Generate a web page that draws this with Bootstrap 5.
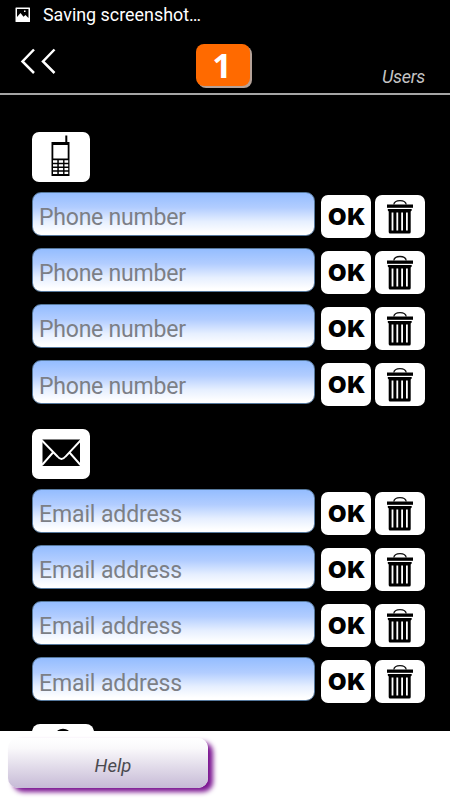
<!DOCTYPE html>
<html lang="en">
<head>
<meta charset="utf-8">
<meta name="viewport" content="width=device-width, initial-scale=1">
<title>Users</title>
<link rel="stylesheet" href="https://cdn.jsdelivr.net/npm/bootstrap@5.3.0/dist/css/bootstrap.min.css">
<style>
  body { font-family: Roboto, "Liberation Sans", sans-serif; width: 450px; height: 800px; }
  svg { display: block; }
  .screen { height: 731px; background: #000; }
  .status { height: 30px; padding-left: 15px; gap: 12px; font-size: 17.9px; line-height: 30px; }
  .topbar { height: 65px; border-bottom: 2px solid #a5a5a5; padding: 14px 25px 0 20px; }
  .back-link { padding-top: 3px; width: 176px; }
  .counter { width: 54px; height: 42px; border-radius: 8px; background: #ff6a00; box-shadow: 2px 2px 0 #b5a298;
    font: bold 34px/42px "Open Sans", sans-serif; padding-right: 2px; }
  .page-name { font-size: 18px; letter-spacing: -.3px; line-height: 22px; color: #c4c4c4; margin-top: 22px; }
  .tile { background: #fff; border-radius: 7px; }
  .tile-head { width: 58px; height: 50px; margin-bottom: 10px; }
  .entries { padding: 36.500px 25px 0 32px; }
  .group { height: 297px; }
  .entry { height: 44px; margin-bottom: 12.2px; }
  .entry .form-control { width: 283px; height: 44px; border: 1px solid #56789c; border-radius: 9px; padding: 8px 6px 0;
    font-size: 23px; letter-spacing: -.22px; color: #333; background: linear-gradient(#94bdff, #b2cdff 35%, #e6efff 68%, #fff 95%); }
  .entry .form-control[type="email"] { letter-spacing: -.12px; }
  .entry .form-control::placeholder { color: #7c7f86; opacity: 1; }
  .entry .act { width: 50px; height: 43px; margin-top: 3px; border: 0; padding: 0; color: #000; background: #fff; border-radius: 7px; }
  .entry .ok { margin-left: 6px; margin-right: 4px; font: 900 22.500px/43px Inter, "Liberation Sans", sans-serif; }
  .ok span { display: inline-block; transform: scaleX(1.06); letter-spacing: .8px; margin-right: -2px; }
  .tile-next { width: 62px; height: 50px; border-radius: 8px; margin-top: -2px; }
  .help { width: 200px; height: 50px; margin: 7px 0 0 8px; border: 0; border-radius: 10px; color: #4a4a50; font-size: 18.500px;
    padding: 7px 0 0 10px; background: linear-gradient(#fff, #faf9fb 20%, #c6bad6); box-shadow: 5px 4px 5px #7b1591; }
</style>
<script src="https://cdn.jsdelivr.net/npm/bootstrap@5.3.0/dist/js/bootstrap.bundle.min.js"></script>
</head>
<body class="bg-white overflow-hidden">
<svg width="0" height="0" class="position-absolute" aria-hidden="true">
  <symbol id="bin" viewBox="0 0 50 43">
    <path d="M18.8 9.500C19.500 4.200 30.500 4.200 31.200 9.500" fill="none" stroke="#111" stroke-width="1.300"/>
    <path d="M12 9.500h26v3.300H12z"/>
    <path d="M12.800 14h23.900v1.500l-1 1V37q0 1.500-1.500 1.500H15.200q-1.500 0-1.500-1.500V16.500l-.9-1z"/>
    <path d="M17.500 17.500V35.500M22.300 17.500V35.500M27.100 17.500V35.500M31.900 17.500V35.500" stroke="#fff" stroke-width="1.800"/>
  </symbol>
</svg>

<main class="screen overflow-hidden">
  <div class="status d-flex align-items-center text-white">
    <svg width="16" height="16" viewBox="0 0 16 16"><path fill="#fff" fill-rule="evenodd" d="M1 .5h13.500q.5 0 .5.500v13.500q0 .5-.5.500H1q-.5 0-.5-.5V1q0-.5.5-.5zM2 2v8l3.500-4 3 3.800L10.500 8l3 3V2zM9 3.500h1.500V5H9z"/></svg>
    <span>Saving screenshot…</span>
  </div>
  <header class="topbar d-flex align-items-start">
    <a class="back-link" href="#" aria-label="Back"><svg width="36" height="28" viewBox="0 0 36 28" fill="none" stroke="#fff" stroke-width="2.500"><path d="M14 2.500L2.500 14.500 14 26M34.500 2.500L23 14.500l11.500 11.500"/></svg></a>
    <div class="counter text-white text-center">1</div>
    <div class="page-name fst-italic ms-auto">Users</div>
  </header>

  <div class="entries">
    <section class="group">
      <div class="tile tile-head"><svg width="58" height="50" viewBox="0 0 58 50">
        <path d="M33.300 3.500h2v7h-2z"/>
        <path d="M19.500 10h18v34h-18z"/>
        <path d="M21.300 13h14.400v13.500H21.300z" fill="#fff"/>
        <path d="M21 28.300h4.300v2.400H21zm5.800 0h4.300v2.400h-4.300zm5.700 0h3.700v2.400h-3.700zM21 32.200h4.300v2.300H21zm5.800 0h4.300v2.300h-4.300zm5.700 0h3.700v2.300h-3.700zM21 36h4.300v2.300H21zm5.800 0h4.300v2.300h-4.300zm5.700 0h3.700v2.300h-3.700zM21 39.700h4.300V42H21zm5.800 0h4.300V42h-4.300zm5.700 0h3.700V42h-3.700z" fill="#fff"/>
      </svg></div>
      <div class="entry d-flex"><input class="form-control" type="tel" placeholder="Phone number"><button class="act ok"><span>OK</span></button><button class="act" aria-label="Delete"><svg width="50" height="43"><use href="#bin"/></svg></button></div>
      <div class="entry d-flex"><input class="form-control" type="tel" placeholder="Phone number"><button class="act ok"><span>OK</span></button><button class="act" aria-label="Delete"><svg width="50" height="43"><use href="#bin"/></svg></button></div>
      <div class="entry d-flex"><input class="form-control" type="tel" placeholder="Phone number"><button class="act ok"><span>OK</span></button><button class="act" aria-label="Delete"><svg width="50" height="43"><use href="#bin"/></svg></button></div>
      <div class="entry d-flex"><input class="form-control" type="tel" placeholder="Phone number"><button class="act ok"><span>OK</span></button><button class="act" aria-label="Delete"><svg width="50" height="43"><use href="#bin"/></svg></button></div>
    </section>
    <section class="group">
      <div class="tile tile-head"><svg width="58" height="50" viewBox="0 0 58 50">
        <path d="M10.500 10.500h37.500V37H10.500z"/>
        <path d="M10 11.500L25.500 27.500q4 5 8 0L48.500 11.500M10 36l11-12.500M48.500 36l-11-12.500" fill="none" stroke="#fff" stroke-width="1.900"/>
      </svg></div>
      <div class="entry d-flex"><input class="form-control" type="email" placeholder="Email address"><button class="act ok"><span>OK</span></button><button class="act" aria-label="Delete"><svg width="50" height="43"><use href="#bin"/></svg></button></div>
      <div class="entry d-flex"><input class="form-control" type="email" placeholder="Email address"><button class="act ok"><span>OK</span></button><button class="act" aria-label="Delete"><svg width="50" height="43"><use href="#bin"/></svg></button></div>
      <div class="entry d-flex"><input class="form-control" type="email" placeholder="Email address"><button class="act ok"><span>OK</span></button><button class="act" aria-label="Delete"><svg width="50" height="43"><use href="#bin"/></svg></button></div>
      <div class="entry d-flex"><input class="form-control" type="email" placeholder="Email address"><button class="act ok"><span>OK</span></button><button class="act" aria-label="Delete"><svg width="50" height="43"><use href="#bin"/></svg></button></div>
    </section>
    <div class="tile tile-next"><svg width="62" height="50" viewBox="0 0 62 50"><path d="M26 7.500q5-3 10 0" fill="none" stroke="#000" stroke-width="2.500"/></svg></div>
  </div>
</main>
<button class="help d-block fst-italic">Help</button>
</body>
</html>
